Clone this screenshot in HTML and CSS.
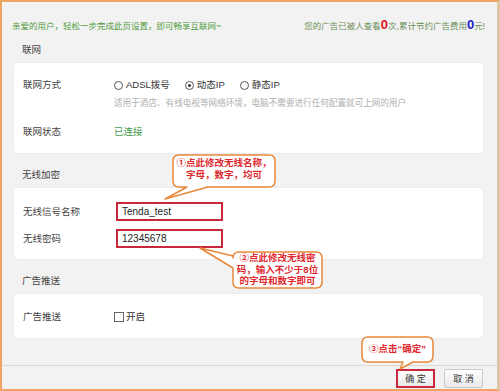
FILE: index.html
```html
<!DOCTYPE html>
<html lang="zh-CN">
<head>
    <meta charset="UTF-8">
    <meta name="viewport" content="width=device-width, initial-scale=1.0">
    <title>快速设置</title>
    <link rel="stylesheet" href="styles.css">
</head>
<body>
    <div class="frame">
        <div class="top">
            <span class="greet">亲爱的用户，轻松一步完成此页设置，即可畅享互联网~</span>
            <span class="stat">您的广告已被人查看<b class="num red">0</b>次,累计节约广告费用<b class="num blue">0</b>元!</span>
        </div>

        <div class="main">
            <div class="group-title">联网</div>
            <div class="card card-net">
                <div class="row">
                    <div class="label">联网方式</div>
                    <div class="value">
                        <div class="options">
                            <span class="opt"><span class="radio"></span>ADSL拨号</span>
                            <span class="opt"><span class="radio checked"></span>动态IP</span>
                            <span class="opt"><span class="radio"></span>静态IP</span>
                        </div>
                        <div class="hint">适用于酒店、有线电视等网络环境，电脑不需要进行任何配置就可上网的用户</div>
                    </div>
                </div>
                <div class="row row-status">
                    <div class="label">联网状态</div>
                    <div class="value ok">已连接</div>
                </div>
            </div>

            <div class="group-title">无线加密</div>
            <div class="card card-wifi">
                <div class="row row-input">
                    <div class="label">无线信号名称</div>
                    <div class="field">Tenda_test</div>
                </div>
                <div class="row row-input">
                    <div class="label">无线密码</div>
                    <div class="field">12345678</div>
                </div>
            </div>

            <div class="group-title">广告推送</div>
            <div class="card card-ad">
                <div class="row">
                    <div class="label">广告推送</div>
                    <div class="value"><span class="opt"><span class="check"></span>开启</span></div>
                </div>
            </div>
        </div>

        <div class="footer">
            <button class="btn btn-ok">确 定</button>
            <button class="btn">取 消</button>
        </div>

        <!-- annotation bubbles -->
        <svg class="marks" width="500" height="391" viewBox="0 0 500 391">
            <path d="M179,155 H269 Q275,155 275,161 V181 Q275,187 269,187 H208 L165,199 L187,187 H179 Q173,187 173,181 V161 Q173,155 179,155 Z"/>
            <path d="M239,252 H316 Q322,252 322,258 V282 Q322,288 316,288 H239 Q233,288 233,282 V268 L200,248 L233,256 V258 Q233,252 239,252 Z"/>
            <path d="M368,337 H427 Q433,337 433,343 V356 Q433,362 427,362 H413 L400,369 L403,362 H368 Q362,362 362,356 V343 Q362,337 368,337 Z"/>
        </svg>
        <div class="tip tip-1">①点此修改无线名称，<br>字母，数字，均可</div>
        <div class="tip tip-2">②点此修改无线密<br>码，输入不少于8位<br>的字母和数字即可</div>
        <div class="tip tip-3">③点击“确定”</div>
    </div>
</body>
</html>
```

FILE: styles.css
```css
html,
body {
    margin: 0;
    font-family: 'Liberation Sans', 'Noto Sans CJK SC', sans-serif;
    font-size: 9.5px;
    color: #444;
    background-color: #f2f2f2;
}

.frame {
    position: relative;
    box-sizing: border-box;
    width: 500px;
    height: 391px;
    display: flex;
    flex-direction: column;
    border-top: 2px solid #f0a464;
    border-left: 2px solid #f0a464;
    border-bottom: 2px solid #f0a464;
    border-right: 3px solid #dcc6a6;
    background-color: #f2f2f2;
}

.top {
    display: flex;
    justify-content: space-between;
    align-items: center;
    height: 14px;
    padding: 16px 12px 0 10px;
    font-size: 8.5px;
}

.greet {
    color: #4f9a3c;
}

.stat {
    color: #6b8f58;
}

.num {
    font-size: 13px;
    font-weight: bold;
    line-height: 10px;
}

.red {
    color: #e0101a;
}

.blue {
    color: #1a22c8;
}

.main {
    padding: 0 13px 0 11px;
}

.group-title {
    margin-top: 11px;
    padding-left: 9px;
    line-height: 14px;
    color: #444;
}

.card {
    margin-top: 5px;
    background-color: #fff;
    border: 1px solid #ededed;
    border-radius: 5px;
    box-sizing: border-box;
    padding-left: 9px;
}

.card-net {
    height: 92px;
    padding-top: 13px;
}

.card-wifi {
    height: 73px;
    padding-top: 14px;
}

.card-ad {
    height: 46px;
    padding-top: 14px;
}

.main .group-title:nth-of-type(3),
.main .group-title:nth-of-type(5) {
    margin-top: 14px;
}

.row {
    display: flex;
    line-height: 18px;
}

.row-status {
    margin-top: 13px;
}

.row-input {
    line-height: 19px;
}

.row-input + .row-input {
    margin-top: 8px;
}

.label {
    width: 91px;
    flex-shrink: 0;
}

.options {
    display: flex;
    gap: 15px;
}

.opt {
    display: inline-flex;
    align-items: center;
    color: #333;
}

.radio {
    width: 7px;
    height: 7px;
    margin-right: 3px;
    border: 1px solid #555;
    border-radius: 50%;
    display: inline-flex;
    align-items: center;
    justify-content: center;
}

.radio.checked::after {
    content: '';
    width: 3px;
    height: 3px;
    border-radius: 50%;
    background-color: #333;
}

.check {
    width: 8px;
    height: 8px;
    margin-right: 2px;
    border: 1px solid #666;
}

.hint {
    margin-top: 2px;
    line-height: 14px;
    font-size: 8.6px;
    color: #b0b0b0;
}

.ok {
    color: #3e9a4a;
}

.field {
    box-sizing: border-box;
    width: 107px;
    height: 19px;
    margin-left: 2px;
    padding-left: 4px;
    border: 2px solid #c8283c;
    line-height: 15px;
    font-size: 10px;
    color: #222;
    background-color: #fff;
}

.footer {
    margin-top: auto;
    height: 24px;
    box-sizing: border-box;
    border-top: 1px solid #dadada;
    padding: 3px 14px 0 0;
    display: flex;
    justify-content: flex-end;
    gap: 9px;
}

.btn {
    box-sizing: border-box;
    width: 39px;
    height: 19px;
    padding: 0;
    border: 1px solid #c8c8c8;
    border-radius: 2px;
    background: linear-gradient(#ffffff, #e8e8e8);
    font-family: inherit;
    font-size: 9px;
    color: #333;
}

.btn-ok {
    border: 2px solid #c8283c;
    border-radius: 0;
}

.marks {
    position: absolute;
    left: -2px;
    top: -2px;
    pointer-events: none;
}

.marks path {
    fill: #fff;
    stroke: #e8883a;
    stroke-width: 1.5;
    stroke-linejoin: round;
}

.tip {
    position: absolute;
    text-align: center;
    font-size: 9.5px;
    font-weight: bold;
    color: #e0282e;
}

.tip-1 {
    left: 171px;
    top: 155px;
    width: 102px;
    line-height: 12px;
}

.tip-2 {
    left: 231px;
    top: 250px;
    width: 89px;
    line-height: 11.5px;
}

.tip-3 {
    left: 360px;
    top: 341px;
    width: 71px;
    line-height: 12px;
}
```
